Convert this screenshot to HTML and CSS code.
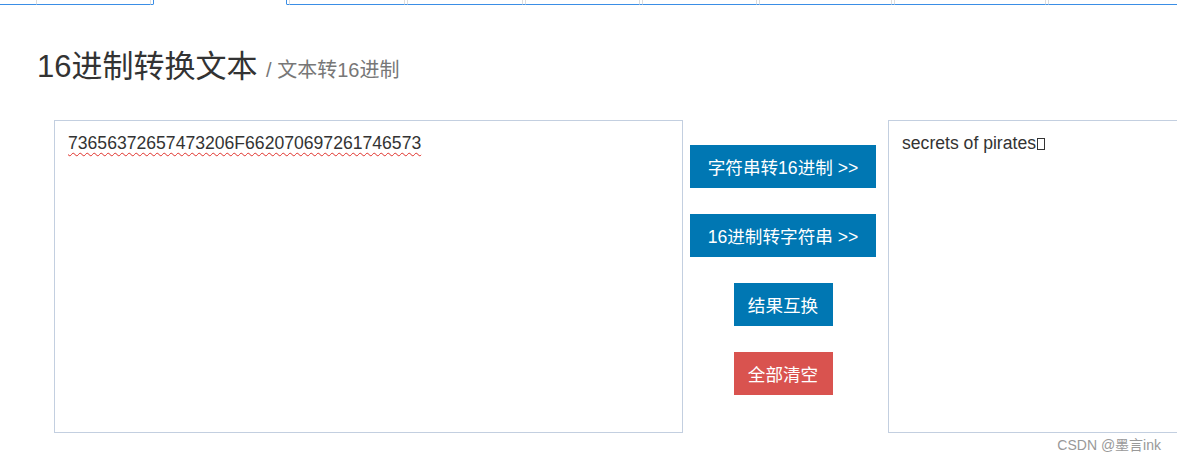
FILE: index.html
```html
<!DOCTYPE html>
<html lang="zh-CN">
<head>
  <meta charset="UTF-8">
  <meta name="viewport" content="width=device-width, initial-scale=1.0">
  <title>16进制转换文本</title>
  <link rel="stylesheet" href="styles.css">
</head>
<body>
  <ul class="nav-tabs">
    <li class="tab" style="width:115px"></li>
    <li class="tab active" style="width:134px"></li>
    <li class="tab" style="width:116px"></li>
    <li class="tab" style="width:116px"></li>
    <li class="tab" style="width:115px"></li>
    <li class="tab" style="width:115px"></li>
    <li class="tab" style="width:133px"></li>
    <li class="tab" style="width:152px"></li>
    <li class="tab" style="width:152px"></li>
  </ul>

  <div class="page">
    <h1 class="page-title">16进制转换文本 <small>/ 文本转16进制</small></h1>

    <div class="convert-row">
      <div class="text-box">
        <span class="misspelled">73656372657473206F662070697261746573</span>
      </div>

      <div class="actions">
        <button class="btn btn-primary">字符串转16进制 &gt;&gt;</button>
        <button class="btn btn-primary">16进制转字符串 &gt;&gt;</button>
        <button class="btn btn-primary">结果互换</button>
        <button class="btn btn-danger">全部清空</button>
      </div>

      <div class="text-box">secrets of pirates<span class="tofu"></span></div>
    </div>
  </div>

  <div class="watermark">CSDN @墨言ink</div>
</body>
</html>
```

FILE: styles.css
```css
* {
  box-sizing: border-box;
  margin: 0;
  padding: 0;
}

body {
  font-family: "Liberation Sans", Arial, "Noto Sans CJK SC", sans-serif;
  background-color: #fff;
  color: #333;
  width: 1177px;
  height: 461px;
  overflow: hidden;
  position: relative;
}

/* tab strip, scrolled mostly out of view */
.nav-tabs {
  list-style: none;
  display: flex;
  padding-left: 36px;
  height: 5px;
  border-bottom: 1px solid #3a8ee6;
}

.tab {
  flex-shrink: 0;
  height: 5px;
  margin-right: 2px;
  margin-bottom: -1px;
  border-left: 1px solid #ddd;
  border-right: 1px solid #ddd;
  border-bottom: 1px solid #3a8ee6;
}

.tab.active {
  border-left-color: #3a8ee6;
  border-right-color: #3a8ee6;
  border-bottom-color: #fff;
}

.page {
  padding-left: 36px;
}

.page-title {
  font-weight: normal;
  font-size: 31px;
  line-height: 40px;
  height: 40px;
  margin-top: 42px;
  padding-left: 1px;
  white-space: nowrap;
}

.page-title small {
  font-size: 20px;
  color: #777;
}

.convert-row {
  display: flex;
  margin-top: 33px;
  padding-left: 18px;
}

.text-box {
  flex-shrink: 0;
  width: 629px;
  height: 313px;
  border: 1px solid #c3cfe0;
  padding: 10px 13px;
  font-size: 17.6px;
  line-height: 24px;
  color: #333;
}

.misspelled {
  text-decoration: underline wavy #e0302a;
  text-decoration-thickness: 1px;
  text-underline-offset: 3px;
}

.tofu {
  display: inline-block;
  width: 8px;
  height: 12px;
  border: 1px solid #333;
  margin-left: 1px;
  vertical-align: -1px;
}

.actions {
  flex-shrink: 0;
  width: 205px;
  display: flex;
  flex-direction: column;
  align-items: center;
  gap: 26px;
  padding-top: 25px;
  padding-right: 5px;
}

.btn {
  height: 43px;
  padding: 0 14px;
  border: none;
  font-family: "Liberation Sans", Arial, "Noto Sans CJK SC", sans-serif;
  font-size: 17.6px;
  color: #fff;
  cursor: pointer;
}

.btn-primary {
  background-color: #0077b3;
}

.btn-primary:nth-child(-n+2) {
  width: 186px;
}

.btn-primary:nth-child(3),
.btn-danger {
  width: 99px;
}

.btn-danger {
  background-color: #d9534f;
}

.watermark {
  position: absolute;
  right: 16px;
  bottom: 7px;
  font-size: 14px;
  color: #999;
}
```
